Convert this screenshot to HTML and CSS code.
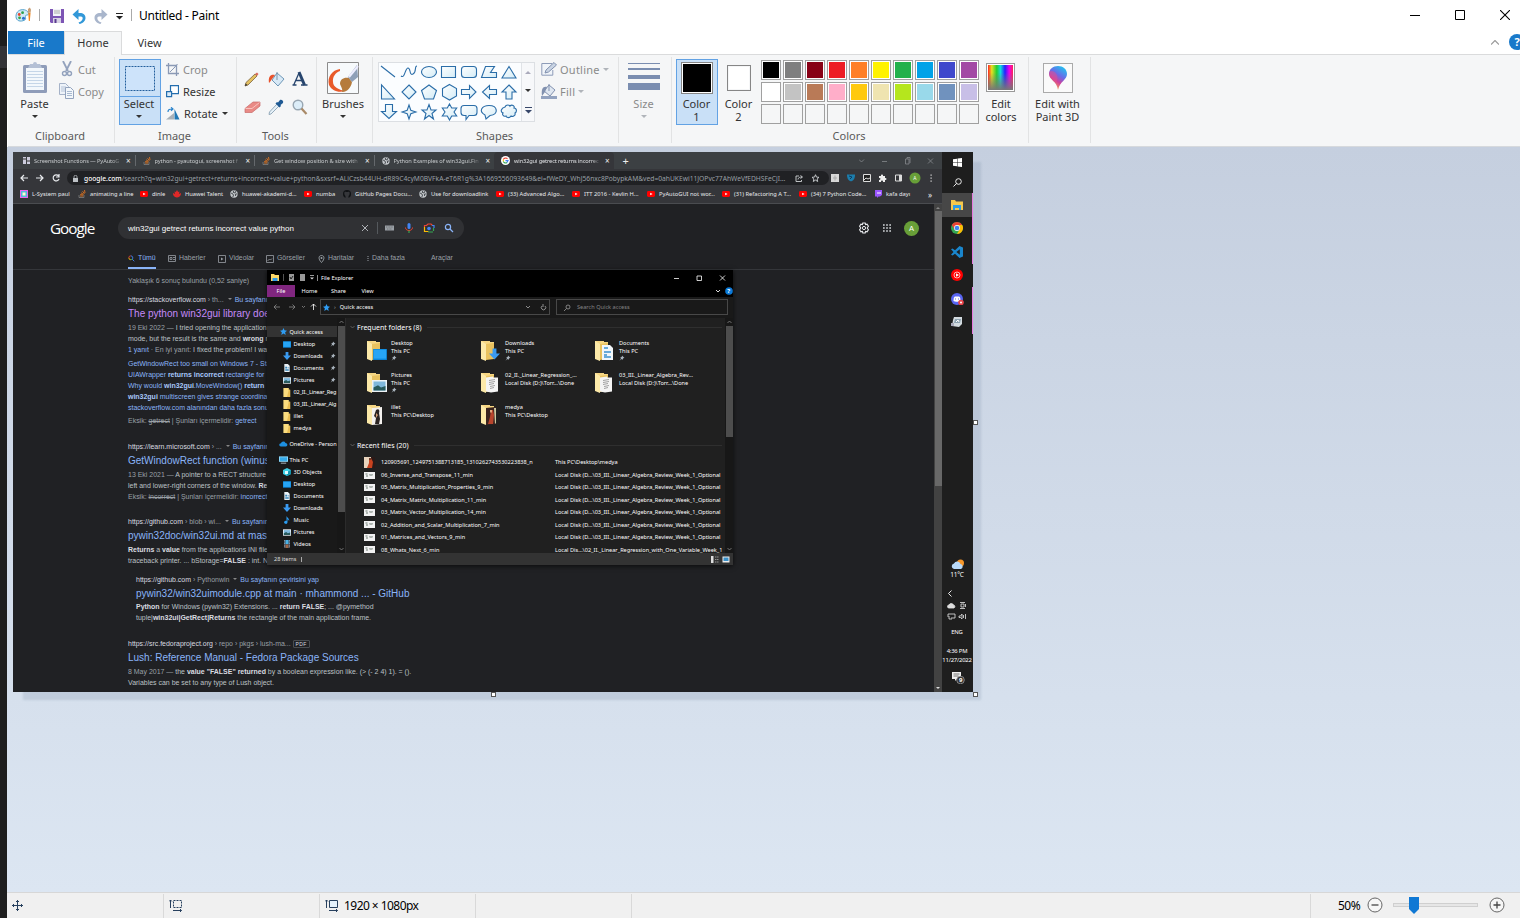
FILE: index.html
```html
<!DOCTYPE html>
<html lang="en">
<head>
<meta charset="utf-8">
<title>Untitled - Paint</title>
<link rel="stylesheet" href="styles.css">
</head>
<body>
<svg class="defs" aria-hidden="true">
  <defs>
    <linearGradient id="rainbow"><stop offset="0" stop-color="#f22"/><stop offset=".15" stop-color="#e8e020"/><stop offset=".35" stop-color="#2c3"/><stop offset=".5" stop-color="#1dd"/><stop offset=".68" stop-color="#22f"/><stop offset=".85" stop-color="#e0e"/><stop offset="1" stop-color="#f25"/></linearGradient>
    <linearGradient id="fade" x2="0" y2="1"><stop offset=".3" stop-color="#777" stop-opacity="0"/><stop offset="1" stop-color="#777"/></linearGradient>
    <linearGradient id="balloon" x1=".8" x2=".3" y2="1"><stop offset="0" stop-color="#1cc8f0"/><stop offset=".4" stop-color="#6a6ae8"/><stop offset=".65" stop-color="#d0409a"/><stop offset="1" stop-color="#fb4"/></linearGradient>
    <linearGradient id="shape" x2="1" y2="1"><stop offset="0" stop-color="#fff"/><stop offset="1" stop-color="#d4ecf6"/></linearGradient>
  </defs>
  <symbol id="pin" viewBox="0 0 6 6"><path d="M3 .5 5.5 3 4.6 3.1 3.6 4.2 3.5 5 2.4 4 .5 5.7 2 3.6 1 2.5 1.8 2.4 2.9 1.4z" fill="#a9b3bd"/></symbol>
  <symbol id="folder" viewBox="0 0 8 10"><path d="M0 0h6v2h1.5v8H0z" fill="#fbdc7e"/><path d="M6 2h1.5v8H4z" fill="#e9bd52"/></symbol>
  <symbol id="desk" viewBox="0 0 10 8"><path d="M0 0h10v8H0z" fill="#0a84d8"/><path d="M.5.5h9v6.5h-9z" fill="#27a5f5"/></symbol>
  <symbol id="down" viewBox="0 0 8 8"><path d="M2.6 0h2.8v3.6H8L4 8 0 3.6h2.6z" fill="#3a9af0"/></symbol>
  <symbol id="doc" viewBox="0 0 8 9"><path d="M1 0h4l2 2v7H1z" fill="#e9f1f6"/><path d="M2 3h2v2H2zM4.5 4h2v.7h-2zM2 6h4v1.5H2z" fill="#3a86b8"/></symbol>
  <symbol id="pic" viewBox="0 0 10 8"><path d="M0 0h10v8H0z" fill="#eef3f6"/><path d="M1 1h8v6H1z" fill="#7fb8dc"/><path d="M1 5l3-1.5L6 5l3-1v3H1z" fill="#285a5c"/></symbol>
  <symbol id="star" viewBox="0 0 8 8"><path d="M4 0 5.2 2.7 8 3 5.9 4.9 6.5 8 4 6.4 1.5 8 2.1 4.9 0 3 2.8 2.7z" fill="#2f9df4"/></symbol>
  <symbol id="cloud" viewBox="0 0 10 7"><path d="M2 6.5a2 2 0 0 1 0-4A3 3 0 0 1 7.4 2.2 2.2 2.2 0 0 1 8 6.5z" fill="#1d8fe0"/></symbol>
  <symbol id="pc" viewBox="0 0 10 8"><path d="M0 0h10v6H0z" fill="#8fdcff"/><path d="M1 1h8v4H1z" fill="#36a9e8"/><path d="M2 7h6v1H2z" fill="#b8c4cc"/></symbol>
  <symbol id="cube" viewBox="0 0 8 8"><path d="M0 2 4 0l4 2v4L4 8 0 6z" fill="#3ed0e6"/><path d="M4 4 8 2v4L4 8z" fill="#1394ae"/><path d="M2 3h3v3H2z" fill="#dffaff"/></symbol>
  <symbol id="music" viewBox="0 0 8 8"><path d="M3.5 0C4 2 7 2.5 6 5 5.800 3.800 5 3.400 4.500 3.300V6.500A1.700 1.500 0 1 1 3.500 5z" fill="#2a9cf0"/></symbol>
  <symbol id="video" viewBox="0 0 8 8"><path d="M1 0h6v8H1z" fill="#35465a"/><path d="M2.500 0h3v4h-3z" fill="#4db2e4"/><path d="M2.500 4.500h3V8h-3z" fill="#a06848"/><path d="M1.500 0v8M6.500 0v8" stroke="#ddd" stroke-width=".6" stroke-dasharray=".8 .8"/></symbol>
  <symbol id="bigfolder" viewBox="0 0 20 22"><path d="M0 1h9v1h4v17H5l-5-2z" fill="#f6d683"/><path d="M0 1l5 3v17l-5-2z" fill="#fce9a8"/><path d="M5 4l8-1v16l-8 1z" fill="#e9c25f"/></symbol>
  <symbol id="yt" viewBox="0 0 8 6"><rect width="8" height="6" rx="1.400" fill="#f00"/><path d="M3.200 1.700 5.600 3 3.200 4.300z" fill="#fff"/></symbol>
  <symbol id="so" viewBox="0 0 8 8"><path d="M1 5v2.500h5V5" fill="none" stroke="#888" stroke-width=".7"/><path d="M2 6h3.200M2.200 4.500l3 .5M3 2.800l2.700 1.600M4.600 1.200l1.800 2.600M6.500 0l.5 3" stroke="#e0741f" stroke-width=".9"/></symbol>
  <symbol id="globe" viewBox="0 0 8 8"><circle cx="4" cy="4" r="3.700" fill="#c4c8cc"/><path d="M1 3l2 1 .5 2-1 1M4 .6l-1 1.600 2 .8 1-2M7.400 4 5.400 4l.2 2" fill="none" stroke="#4a4e53" stroke-width="1"/></symbol>
  <symbol id="chrome" viewBox="0 0 12 12"><circle cx="6" cy="6" r="6" fill="#34a853"/><path d="M.8 3A6 6 0 0 1 11.200 3H6L3.400 7.500z" fill="#ea4335"/><path d="M11.200 3A6 6 0 0 1 6 12L8.600 7.500 6 3z" fill="#fbbc05"/><circle cx="6" cy="6" r="2.900" fill="#fff"/><circle cx="6" cy="6" r="2.300" fill="#4285f4"/></symbol>
  <symbol id="thumb" viewBox="0 0 11 7"><path d="M0 0h11v7H0z" fill="#f2f2f2"/><path d="M1.500 1.500h2v1h-2zM2 3.500h2v1H2zM5 2h4v.6H5zM5.500 3.500h3v.5h-3z" fill="#6d7a70"/></symbol>
  <symbol id="sheet" viewBox="0 0 13 16"><path d="M0 1l7-1v1h5v14l-7 1-5-1z" fill="#f4f4f4"/><path d="M3 4l6-1M3 6l6-1M3 8l5-1M4 10l5-1M4 12l4-1" stroke="#8b8b8b" stroke-width=".8"/></symbol>
</svg>

<div class="edge"></div>
<div class="app">
  <header class="titlebar">
    <svg class="logo" width="17" height="16" viewBox="0 0 18 17"><path d="M1 10C1 5 5 2 10 3c4 1 5 4 4 5s-3 0-3 2 1 3-1 4c-4 2-9 1-9-4z" fill="#cfe9f6" stroke="#4b9cc9"/><circle cx="4.500" cy="8" r="1.500" fill="#e8452e"/><circle cx="8" cy="6" r="1.500" fill="#2b9f4d"/><circle cx="4.800" cy="11.500" r="1.500" fill="#3aa33e"/><circle cx="9" cy="12" r="1.600" fill="#2a6fd0"/><path d="M14 6h2.500l-.8 9h-1z" fill="#f2861c"/><path d="M13.500 6l.3-4 2-1.500L17 3l-.5 3z" fill="#c8a078"/></svg>
    <i class="bar"></i>
    <svg class="save" width="14" height="14" viewBox="0 0 14 14"><path d="M0 0h14v14H1l-1-1z" fill="#7d55b5"/><path d="M3 0h8v7H3z" fill="#f3f3f8"/><path d="M4 2h6M4 4h6" stroke="#aaa"/><path d="M3 9h8v5H3z" fill="#d8d2e4"/><path d="M4.500 10h2v4h-2z" fill="#5a3b90"/></svg>
    <svg class="undo" width="14" height="15" viewBox="0 0 14 15"><path d="M6.500 0v4c4-.5 7 1 7 5 0 3-3 5.500-6 6l-1-1.500c3-1 4.300-2.700 4.200-4.500-.2-1.500-2-1.800-4.200-1.500V11L.5 5.500z" fill="#3298d8"/></svg>
    <svg class="redo" width="14" height="15" viewBox="0 0 14 15"><path d="M7.500 0v4c-4-.5-7 1-7 5 0 3 3 5.500 6 6l1-1.500C4.500 12.500 3.200 10.800 3.300 9c.2-1.500 2-1.800 4.200-1.500V11l6-5.500z" fill="#a9b6cc"/></svg>
    <svg class="qat" width="7" height="7" viewBox="0 0 7 7"><path d="M0 .5h7" stroke="#222"/><path d="M0 3h7L3.500 6.500z" fill="#222"/></svg>
    <i class="bar dark"></i>
    <span class="name">Untitled - Paint</span>
    <div class="winbtns">
      <svg width="10" height="10"><path d="M0 5.500h10" stroke="#000"/></svg>
      <svg width="10" height="10"><path d="M.5.5h9v9h-9z" fill="none" stroke="#000"/></svg>
      <svg width="10" height="10"><path d="M0 0l10 10M10 0 0 10" stroke="#000" stroke-width="1.100"/></svg>
    </div>
  </header>
  <nav class="tabs">
    <span class="tab file">File</span><span class="tab home">Home</span><span class="tab view">View</span>
    <div class="tabsright">
      <svg width="8" height="5" viewBox="0 0 8 5"><path d="M0 4.500 4 .5l4 4" fill="none" stroke="#9a9a9a" stroke-width="1.200"/></svg>
      <span class="help">?</span>
    </div>
  </nav>
  <section class="ribbon">
    <div class="group g-clip">
      <div class="body">
        <div class="big paste">
          <svg width="26" height="32" viewBox="0 0 26 32"><rect x="1" y="3" width="24" height="28" rx="1.500" fill="#8e9cb9"/><rect x="4" y="6" width="18" height="22" fill="#f3f8fc"/><path d="M5 9.500h16M5 12.500h16M5 15.500h16M5 18.500h16M5 21.500h16M5 24.500h16" stroke="#c5d6e8"/><path d="M8 2h3a2 2 0 0 1 4 0h3l2 4H6z" fill="#b4c0d5"/></svg>
          <span>Paste</span><i class="caret"></i>
        </div>
        <div class="col cutcopy">
          <div class="row dim"><svg width="16" height="16" viewBox="0 0 16 16"><path d="M4 0l5 10M12 0 7 10" stroke="#93a2bd" stroke-width="1.800"/><circle cx="5.500" cy="12.500" r="2" fill="none" stroke="#93a2bd" stroke-width="1.400"/><circle cx="10.500" cy="12.500" r="2" fill="none" stroke="#93a2bd" stroke-width="1.400"/></svg>Cut</div>
          <div class="row dim"><svg width="16" height="16" viewBox="0 0 16 16"><path d="M.5.5h6l3 3v8h-9z" fill="#eef3f9" stroke="#a5b2c8"/><path d="M2 4h5M2 6h5M2 8h4" stroke="#b5c3d8"/><path d="M6.500 4.500h5l3 3v8h-8z" fill="#f3f7fb" stroke="#93a3bd"/><path d="M8 8.500h5M8 10.500h5M8 12.500h5" stroke="#a8b9d0"/></svg>Copy</div>
        </div>
      </div>
      <div class="label">Clipboard</div>
    </div>
    <div class="group g-image">
      <div class="body">
        <div class="select">
          <div class="selicon"><svg width="30" height="25"><rect x=".5" y=".5" width="29" height="24" fill="#cde3fa" stroke="#235f9c" stroke-dasharray="2 1"/></svg></div>
          <div class="sellabel"><span>Select</span><i class="caret"></i></div>
        </div>
        <div class="col imgcol">
          <div class="row dim"><svg width="13" height="13" viewBox="0 0 13 13"><path d="M2.500 0v10.500H13M0 2.500h10.500V13" fill="none" stroke="#8a99b5" stroke-width="1.300"/><path d="M4 9l5-5M8 5l3.500-4" stroke="#8a99b5"/></svg>Crop</div>
          <div class="row"><svg width="13" height="13" viewBox="0 0 13 13"><path d="M4.500.6h8v8h-8z" fill="#fff" stroke="#246eae" stroke-width="1.200"/><path d="M.6 6.600h5v5h-5z" fill="#d9eaf8" stroke="#246eae" stroke-width="1.200"/></svg>Resize</div>
          <div class="row"><svg width="14" height="13" viewBox="0 0 14 13"><path d="M0 12.500 8 6v6.500z" fill="#a8b1b8"/><path d="M8.500 2v10.500h5z" fill="#2178b4"/><path d="M2 5c0-2 1-3 4-3M5 .3 7 2 5 3.800" fill="none" stroke="#2a84cc" stroke-width="1.200"/></svg>Rotate <i class="caret"></i></div>
        </div>
      </div>
      <div class="label">Image</div>
    </div>
    <div class="group g-tools">
      <div class="body tools">
        <svg width="16" height="16" viewBox="0 0 16 16"><path d="M1 15l1-3.500 9-8.500 2 2-9 9z" fill="#e3c060" stroke="#7d6440" stroke-width=".8"/><path d="M11 3l2-1.500L14.500 3 13 5z" fill="#d86a5c"/><path d="M1 15l.6-2.500L3.500 14z" fill="#333"/></svg>
        <svg width="17" height="16" viewBox="0 0 17 16"><path d="M9 2l7 6-6 7-6-6z" fill="#d8e9f6" stroke="#6f98b8"/><path d="M9 9V1" stroke="#7b96ac"/><path d="M7 4C3 3 0 5 1 12c1.500-1 2-3 3-4z" fill="#e8522c"/></svg>
        <svg width="16" height="16" viewBox="0 0 16 16"><path d="M1.500 14.500 7 2M4 9.500h7M.5 14h4M9 14h6.500" fill="none" stroke="#27456e" stroke-width="1.300"/><path d="M7 1l5.500 13" stroke="#27456e" stroke-width="3"/></svg>
        <svg width="17" height="16" viewBox="0 0 17 16"><path d="M1 9.500l8-6.500h7v4L8 13.500H1z" fill="#e98a86" stroke="#c86c6a" stroke-width=".7"/><path d="M1.500 9.500H8L15.500 3.500" fill="none" stroke="#f8c3be"/></svg>
        <svg width="16" height="16" viewBox="0 0 16 16"><path d="M9 5l2 2-8 8-2 .5.500-2.500z" fill="#e6f1f8" stroke="#7d98ac" stroke-width=".8"/><path d="M7.500 4.500 9 3l1 .5L12 1c1.500-1 4 1 3 3l-2.500 2 .5 1-1.500 1.500z" fill="#1f5a94"/></svg>
        <svg width="16" height="16" viewBox="0 0 16 16"><circle cx="6" cy="6" r="4.800" fill="#dcedf8" stroke="#98a6b2" stroke-width="1.400"/><path d="M9.500 9.500 14.500 15" stroke="#a98a68" stroke-width="2.200"/></svg>
      </div>
      <div class="label">Tools</div>
    </div>
    <div class="group g-brush">
      <div class="big">
        <svg width="32" height="32" viewBox="0 0 32 32"><path d="M.5.500h31v31H.500z" fill="#f7fafc" stroke="#8c8c8c"/><path d="M13 7C5 8 0 15 2 23c3 6 9 8 17 6-7-1-13-4-13-9-.5-5 2-9 7-11z" fill="#e85a2a"/><path d="M13 22c0-5 4-7 9-6l3 4c-1 6-5 10-10 10 1-3-1-5-2-8z" fill="#b57b3c"/><path d="M21 15 30 3l1 12-6 5z" fill="#8fa0b8"/><path d="M22 15 31 4" stroke="#eef" stroke-width="2"/></svg>
        <span>Brushes</span><i class="caret"></i>
      </div>
    </div>
    <div class="group g-shapes">
      <div class="body">
        <div class="gallery">
          <svg class="shapes" width="142" height="58" viewBox="1 0 142 58" fill="url(#shape)" stroke="#2a6da8" stroke-width="1.100">
            <path d="M3 3l14 11"/><path d="M23 13c4 3 4-8 7-8s1 8 5 6 1-8 4-8" fill="none"/><ellipse cx="51" cy="9" rx="7.500" ry="5.500"/><path d="M63.500 3.500h14v11h-14z"/><rect x="83.500" y="3.500" width="15" height="11" rx="3"/><path d="M103.500 14.500l4-11h9l-4 6h6v5z"/><path d="M131 3.500l7 11.500h-14z"/>
            <path d="M3.500 22v14h13z"/><path d="M31 22l7 7-7 7-7-7z"/><path d="M51 22l7.500 5.500-3 8.500h-9l-3-8.500z"/><path d="M71.500 21.500l7 4v7.500l-7 4-7-4v-7.500z"/><path d="M83.500 26.500h8v-4l6.500 6.500-6.500 6.500v-4h-8z"/><path d="M118.500 26.500h-7v-4l-7 6.500 7 6.500v-4h7z"/><path d="M131 22l7 7h-4v7h-6v-7h-4z"/>
            <path d="M7.500 41.500h7v7h4l-7.500 7-7.500-7h4z"/><path d="M31 42l1.800 5.200L38 49l-5.200 1.800L31 56l-1.800-5.200L24 49l5.200-1.800z"/><path d="M51 41.500l2 5.500h5l-4 3.500 1.500 5.500-4.500-3.500-4.500 3.500 1.500-5.500-4-3.500h5z"/><path d="M71.500 41l2.200 4h5l-2.700 4 2.700 4h-5l-2.200 4-2.200-4h-5l2.700-4-2.700-4h5z"/><path d="M86 42.500h10q3 0 3 3v4q0 3-3 3h-5l-3 4v-4h-2q-3 0-3-3v-4q0-3 3-3z"/><path d="M107 52c-7-4-3-9.500 4-9.500 9 0 10 9 1 10l-4 3.500z"/><path d="M127 44c1-3 5-2 5-1 2-2 5 0 4 2 3 0 3 4 1 5 1 3-3 4-4 3-2 3-5 1-5 0-3 1-4-2-3-3-3-1-2-5 2-6z"/>
          </svg>
          <div class="gscroll"><i class="caret up"></i><i class="caret"></i><svg width="7" height="7" viewBox="0 0 7 7"><path d="M0 .5h7" stroke="#37476a"/><path d="M0 3h7L3.500 6.500z" fill="#37476a"/></svg></div>
        </div>
        <div class="col outl">
          <div class="row dim"><svg width="16" height="14" viewBox="0 0 16 14"><path d="M11 1.500H.8v11.700h11V8" fill="#f0f4f9" stroke="#8d9cb8"/><path d="M4 11l1-3 8-7.500L15.500 3l-8 7z" fill="#c9d4e4" stroke="#8191af"/></svg>Outline <i class="caret"></i></div>
          <div class="row dim"><svg width="16" height="15" viewBox="0 0 16 15"><path d="M0 12h16v3H0z" fill="#93a3c0"/><path d="M8 1l6 5-5 6-6-5z" fill="#dfe7f1" stroke="#8191af"/><path d="M8 7V0" stroke="#8191af"/><path d="M6 3C2 2 0 5 1 12l3-4z" fill="#8191af"/></svg>Fill <i class="caret"></i></div>
        </div>
      </div>
      <div class="label">Shapes</div>
    </div>
    <div class="group g-size">
      <div class="big dim">
        <svg width="32" height="32" viewBox="0 0 32 32"><path d="M0 1h32v1H0zM0 6h32v2H0zM0 13h32v4H0zM0 21h32v7H0z" fill="#7a8db0"/></svg>
        <span>Size</span><i class="caret"></i>
      </div>
    </div>
    <div class="group g-colors">
      <div class="body">
        <div class="colorbtn on"><i class="well black"></i><span>Color<br>1</span></div>
        <div class="colorbtn"><i class="well white"></i><span>Color<br>2</span></div>
        <div class="palette"><i></i><i></i><i></i><i></i><i></i><i></i><i></i><i></i><i></i><i></i><i></i><i></i><i></i><i></i><i></i><i></i><i></i><i></i><i></i><i></i><i></i><i></i><i></i><i></i><i></i><i></i><i></i><i></i><i></i><i></i></div>
        <div class="colorbtn edit"><svg width="30" height="30" viewBox="0 0 30 30"><rect x=".5" y=".5" width="28" height="28" fill="#fff" stroke="#999"/><path d="M2 2h25v25H2z" fill="url(#rainbow)"/><path d="M2 2h25v25H2z" fill="url(#fade)"/></svg><span>Edit<br>colors</span></div>
      </div>
      <div class="label">Colors</div>
    </div>
    <div class="group g-3d">
      <div class="colorbtn edit"><svg width="30" height="30" viewBox="0 0 30 30"><rect x=".5" y=".5" width="29" height="29" fill="#fafafa" stroke="#aaa"/><path d="M15 3c5 0 9 3 9 8 0 6-7 7-9 16-1-9-9-10-9-16 0-5 4-8 9-8z" fill="url(#balloon)"/><path d="M6.500 9c4-3 8 2 8 6l-1 5C11 16 6 15 6.500 9z" fill="#e8508c" opacity=".45"/></svg><span>Edit with<br>Paint 3D</span></div>
    </div>
  </section>

  <main class="stage">
    <div class="canvas">
      <div class="browser">
        <div class="ctabs">
          <div class="ctab t1"><svg width="7" height="7" viewBox="0 0 7 7"><path d="M0 0h3v7H0zM4 0h3v7H4z" fill="#ccd"/><path d="M0 2h3M4 4h3" stroke="#333"/></svg><span>Screenshot Functions — PyAutoG</span><b>×</b></div>
          <div class="ctab t2"><svg width="8" height="8"><use href="#so"/></svg><span>python - pyautogui, screenshot f</span><b>×</b></div>
          <div class="ctab t3"><svg width="8" height="8"><use href="#so"/></svg><span>Get window position &amp; size with</span><b>×</b></div>
          <div class="ctab t4"><svg width="8" height="8"><use href="#globe"/></svg><span>Python Examples of win32gui.Fin</span><b>×</b></div>
          <div class="ctab active"><svg width="9" height="9" viewBox="0 0 9 9"><circle cx="4.500" cy="4.500" r="4.500" fill="#fff"/><path d="M6.500 3A2.500 2.500 0 0 0 2.300 3.500" stroke="#ea4335" fill="none" stroke-width="1.100"/><path d="M2.300 3.500v2" stroke="#fbbc05" stroke-width="1.100"/><path d="M2.300 5.500A2.500 2.500 0 0 0 6 6.500" stroke="#34a853" fill="none" stroke-width="1.100"/><path d="M4.500 4.600H7L6 6.500" stroke="#4285f4" fill="none" stroke-width="1.100"/></svg><span>win32gui getrect returns incorrec</span><b>×</b></div>
          <span class="plus">+</span>
          <svg class="cwin" width="76" height="8" viewBox="0 0 76 8" fill="none" stroke="#85898d" stroke-width=".8"><path d="M0 2.500 2.500 5 5 2.500M23 4.500h5M46.500 2h3.500v5h-3.500zM48 2V.5h3V6M69 1.500l5 5M74 1.500l-5 5"/></svg>
        </div>
        <div class="ctool">
          <svg class="nav" width="42" height="10" viewBox="0 0 42 10" fill="none" stroke="#e8eaed" stroke-width="1.200"><path d="M8 5H1M4 2 1 5l3 3M16 5h7M20 2l3 3-3 3M38.500 3a3 3 0 1 0 .5 3M39 1v3h-3"/></svg>
          <div class="omni">
            <svg width="5" height="7" viewBox="0 0 5 7"><path d="M0 3h5v4H0z" fill="#bdc1c6"/><path d="M1 3V1.800a1.500 1.500 0 0 1 3 0V3" fill="none" stroke="#bdc1c6" stroke-width=".8"/></svg>
            <span class="url"><b>google.com</b>/search?q=win32gui+getrect+returns+incorrect+value+python&amp;sxsrf=ALiCzsb44UH-dR89C4cyM0BVFkA-eT6R1g%3A1669556093649&amp;ei=fWeDY_WhJ56nxc8PobypkAM&amp;ved=0ahUKEwi11JOPvc77AhWeVfEDHSFeCjI...</span>
            <svg class="share" width="26" height="9" viewBox="0 0 26 9" fill="none" stroke="#cfd2d5" stroke-width=".9"><path d="M4 2H1v5.500h5.500V6M3 5.500C3 3.500 5 3 7 3M5.500 1.500l2 1.500-2 1.500"/><path d="M20.500.7l1 2.400 2.500.2-1.900 1.700.6 2.500-2.200-1.400-2.200 1.400.6-2.500L17 3.300l2.500-.2z"/></svg>
          </div>
          <svg class="exts" width="105" height="12" viewBox="0 0 105 12"><path d="M2 2h8v8H2z" fill="#d8d8d8"/><path d="M4 6h4M6 3.500v5" stroke="#aaa"/><path d="M18 2.500h8c0 5-2 6-4 7-2-1-4-2-4-7z" fill="#1c7dac"/><path d="M20 4l3 1-2 2" stroke="#0c3d60" fill="none"/><path d="M34.500 2.500h7v7h-7z" fill="#222" stroke="#ddd"/><path d="M35 8l2-2 2 1 2-1" stroke="#ddd" fill="none"/><path d="M50 4h2c-.5-2 2.500-2 2 0h2v2c2-.5 2 2.500 0 2v2h-2c.5-2-2.500-2-2 0h-2V8c2 0 2-2.500 0-2z" fill="#eee"/><path d="M66.500 3h6v6h-6z" fill="none" stroke="#ddd"/><path d="M70 3h3v6h-3z" fill="#ddd"/><circle cx="86" cy="6" r="5.500" fill="#689f38"/><path d="M101.500 2.500h1.200v1.200h-1.200zM101.500 5.500h1.200v1.200h-1.200zM101.500 8.500h1.200v1.200h-1.200z" fill="#ddd"/><text x="84.300" y="8" class="ava">A</text></svg>
        </div>
        <div class="marks">
          <span class="m1"><svg width="8" height="8" viewBox="0 0 8 8"><path d="M0 0h8v8H0z" fill="#e6e"/><path d="M1 1h6v6H1z" fill="#5bd"/><path d="M2.500 2.500h3v3h-3z" fill="#ffc"/></svg>L-System paul</span>
          <span class="m2"><svg width="8" height="8"><use href="#so"/></svg>animating a line</span>
          <span class="m3"><svg width="8" height="6"><use href="#yt"/></svg>dinle</span>
          <span class="m4"><svg width="8" height="8" viewBox="0 0 8 8"><path d="M4 7.500C0 7 0 4 0 3l2 1L1.500 1.500 3 2l.5-1.500h1L5 2l1.500-.5L6 4l2-1c0 1 0 4-4 4.500z" fill="#e02828"/></svg>Huawei Talent</span>
          <span class="m5"><svg width="8" height="8"><use href="#globe"/></svg>huawei-akademi-d...</span>
          <span class="m6"><svg width="8" height="6"><use href="#yt"/></svg>numba</span>
          <span class="m7"><svg width="8" height="8" viewBox="0 0 8 8"><circle cx="4" cy="4" r="4" fill="#101215"/><path d="M2.500 8V6C1 5 1 2 2 1.500l1 .5h2l1-.5C7 2 7 5 5.500 6v2" fill="#35363a"/></svg>GitHub Pages Docu...</span>
          <span class="m8"><svg width="8" height="8"><use href="#globe"/></svg>Use for downloadlink</span>
          <span class="m9"><svg width="8" height="6"><use href="#yt"/></svg>(33) Advanced Algo...</span>
          <span class="m10"><svg width="8" height="6"><use href="#yt"/></svg>ITT 2016 - Kevlin H...</span>
          <span class="m11"><svg width="8" height="6"><use href="#yt"/></svg>PyAutoGUI not wor...</span>
          <span class="m12"><svg width="8" height="6"><use href="#yt"/></svg>(31) Refactoring A T...</span>
          <span class="m13"><svg width="8" height="6"><use href="#yt"/></svg>(34) 7 Python Code...</span>
          <span class="m14"><svg width="7" height="8" viewBox="0 0 7 8"><path d="M0 0h7v5L5 6.500H3.500L2 8V6.500H0z" fill="#9a55ff"/><path d="M3 2v2M5 2v2" stroke="#fff"/></svg>kafa dayı</span>
          <span class="more">»</span>
        </div>
        <div class="page">
          <div class="doc">
            <div class="ghead">
              <div class="glogo">Google</div>
              <div class="gsearch"><span>win32gui getrect returns incorrect value python</span>
                <svg width="96" height="12" viewBox="0 0 96 12"><path d="M3 3l6 6M9 3 3 9" stroke="#bdc1c6" stroke-width=".9"/><path d="M18.500 0v12" stroke="#5f6368" stroke-width=".8"/><path d="M26 3.500h9v5h-9z" fill="#9aa0a6"/><path d="M27 5h7M28 7h5" stroke="#555" stroke-width=".6" stroke-dasharray="1 .6"/><rect x="48.500" y="1" width="3" height="6" rx="1.500" fill="#4285f4"/><path d="M46.500 5.500c0 4 7 4 7 0" fill="none" stroke="#ea4335"/><path d="M50 8.500V11" stroke="#34a853" stroke-width="1.200"/><path d="M65.500 5V3.500h2L69 2h3l1.500 1.500" fill="none" stroke="#ea4335" stroke-width="1.200"/><path d="M65.500 5v4.500h4" fill="none" stroke="#fbbc05" stroke-width="1.200"/><path d="M69 10h5M74.500 9V6" stroke="#34a853" stroke-width="1.200"/><path d="M73 3.500h2V6" fill="none" stroke="#4285f4" stroke-width="1.200"/><circle cx="70" cy="6.500" r="1.800" fill="#4285f4"/><circle cx="89" cy="5" r="2.600" fill="none" stroke="#8ab4f8" stroke-width="1.200"/><path d="M91 7l3 3" stroke="#8ab4f8" stroke-width="1.300"/></svg>
              </div>
              <svg class="gtools" width="34" height="12" viewBox="0 0 34 12"><path d="M4.800 1h2.400l.4 1.600 1.500-.4 1.300 2L9.200 6l1.200 1.800-1.300 2-1.500-.4-.4 1.600H4.800l-.4-1.600-1.500.4-1.300-2L2.800 6 1.600 4.200l1.300-2 1.500.4z" fill="none" stroke="#e8eaed" stroke-width="1.100"/><circle cx="6" cy="6" r="1.600" fill="none" stroke="#e8eaed"/><path d="M25 3h8M25 6h8M25 9h8" stroke="#d0d3d6" stroke-width="1.700" stroke-dasharray="1.700 1.450"/></svg>
              <span class="gava">A</span>
            </div>
            <div class="gtabs">
              <span class="on"><svg width="7" height="7" viewBox="0 0 10 10" fill="none" stroke-width="1.300"><path d="M4 1.200A2.800 2.800 0 0 0 1.200 4" stroke="#ea4335"/><path d="M1.200 4A2.800 2.800 0 0 0 4 6.800" stroke="#fbbc05"/><path d="M4 1.200A2.800 2.800 0 0 1 6 6l3 3" stroke="#4285f4"/><path d="M4 6.800 6 6" stroke="#34a853"/></svg>Tümü</span>
              <span class="n2"><svg width="8" height="7" viewBox="0 0 8 7"><path d="M.5.5h7v6h-7zM2 2.500h2v2H2zM5 2.500h2M5 4.500h2" fill="none" stroke="#9aa0a6" stroke-width=".8"/></svg>Haberler</span>
              <span class="n3"><svg width="8" height="8" viewBox="0 0 8 8"><path d="M.5.5h7v7h-7z" fill="none" stroke="#9aa0a6" stroke-width=".8"/><path d="M3 2.500v3L5.500 4z" fill="#9aa0a6"/></svg>Videolar</span>
              <span class="n4"><svg width="8" height="8" viewBox="0 0 8 8"><path d="M.5.5h7v7h-7zM1.500 6l2-2 1 1L6 3.500" fill="none" stroke="#9aa0a6" stroke-width=".8"/></svg>Görseller</span>
              <span class="n5"><svg width="7" height="8" viewBox="0 0 7 8"><path d="M3.500 7.500C0 4 .5.500 3.500.500S7 4 3.500 7.500z" fill="none" stroke="#9aa0a6" stroke-width=".9"/><circle cx="3.500" cy="3" r="1" fill="#9aa0a6"/></svg>Haritalar</span>
              <span class="n6"><svg width="2" height="7" viewBox="0 0 2 7"><path d="M.5 1h1v1h-1zM.5 3h1v1h-1zM.5 5h1v1h-1z" fill="#9aa0a6"/></svg>Daha fazla</span>
              <span class="n7">Araçlar</span>
            </div>
            <div class="results">
              <p class="stat">Yaklaşık 6 sonuç bulundu (0,52 saniye)</p>
              <article>
                <p class="u">https://stackoverflow.com <s>› th...</s> <i></i><a>Bu sayfanın</a></p>
                <h3 class="seen">The python win32gui library does</h3>
                <p><s>19 Eki 2022 —</s> I tried opening the application in</p>
                <p>mode, but the result is the same and <b>wrong</b> re</p>
                <p><a>1 yanıt</a> <s>· En iyi yanıt:</s> I fixed the problem! I was</p>
                <div class="links">
                  <p>GetWindowRect too small on Windows 7 - Sta</p>
                  <p>UIAWrapper <b>returns incorrect</b> rectangle for</p>
                  <p>Why would <b>win32gui</b>.MoveWindow() <b>return</b></p>
                  <p><b>win32gui</b> multiscreen gives strange coordinat</p>
                  <p>stackoverflow.com alanından daha fazla sonuç</p>
                </div>
                <p class="miss"><s>Eksik: <del>getrect</del> | Şunları içermelidir:</s> <a>getrect</a></p>
              </article>
              <article class="r2">
                <p class="u">https://learn.microsoft.com <s>› ...</s> <i></i><a>Bu sayfanın</a></p>
                <h3>GetWindowRect function (winuser</h3>
                <p><s>13 Eki 2021 —</s> A pointer to a RECT structure th</p>
                <p>left and lower-right corners of the window. <b>Ret</b></p>
                <p><s>Eksik: <del>incorrect</del> | Şunları içermelidir:</s> <a>incorrect</a></p>
              </article>
              <article class="r3">
                <p class="u">https://github.com <s>› blob › wi...</s> <i></i><a>Bu sayfanın</a></p>
                <h3>pywin32doc/win32ui.md at master</h3>
                <p><b>Returns</b> a <b>value</b> from the applications INI file</p>
                <p>traceback printer. ... bStorage=<b>FALSE</b> : int. No</p>
              </article>
              <article class="r4">
                <p class="u">https://github.com <s>› Pythonwin</s> <i></i><a>Bu sayfanın çevirisini yap</a></p>
                <h3>pywin32/win32uimodule.cpp at main · mhammond ... - GitHub</h3>
                <p><b>Python</b> for Windows (pywin32) Extensions. ... <b>return FALSE</b>; ... @pymethod</p>
                <p>tuple|<b>win32ui|GetRect|Returns</b> the rectangle of the main application frame.</p>
              </article>
              <article class="r5">
                <p class="u">https://src.fedoraproject.org <s>› repo › pkgs › lush-ma...</s> <em>PDF</em></p>
                <h3>Lush: Reference Manual - Fedora Package Sources</h3>
                <p><s>8 May 2017 —</s> the <b>value "FALSE" returned</b> by a boolean expression like. (&gt; (- 2 4) 1). = ().</p>
                <p>Variables can be set to any type of Lush object.</p>
              </article>
            </div>
          </div>
          <div class="pscroll"><i class="caret up"></i><div class="pthumb"></div><i class="caret"></i></div>
        </div>
      </div>

      <div class="explorer">
        <div class="etitle">
          <svg width="36" height="9" viewBox="0 0 36 9"><path d="M0 1h3l1 1h4v6H0z" fill="#fbd767"/><path d="M1.500 5h5v3h-5z" fill="#2f9be8"/><path d="M12.500 1v7" stroke="#777" stroke-width=".7"/><path d="M18 1h5v7h-5zM29 1h5v7h-5z" fill="#999"/><path d="M19 4l1 2 2-3" stroke="#222" fill="none"/></svg>
          <svg width="4" height="5" viewBox="0 0 4 5"><path d="M0 .5h4" stroke="#ddd" stroke-width=".7"/><path d="M0 2.500h4L2 4.500z" fill="#ddd"/></svg>
          <i></i><span>File Explorer</span>
          <svg class="ewin" width="52" height="8" viewBox="0 0 52 8" fill="none" stroke="#fff" stroke-width=".8"><path d="M0 4.500h5M23 2h4.500v4.500H23zM46 1.500l5 5M51 1.500l-5 5"/></svg>
        </div>
        <div class="etabs"><span class="efile">File</span><span>Home</span><span>Share</span><span>View</span>
          <svg width="18" height="8" viewBox="0 0 18 8"><path d="M1 3l2 2 2-2" fill="none" stroke="#ddd"/><circle cx="14" cy="4" r="3.800" fill="#0a78d6"/><text x="12.300" y="6.200" class="q">?</text></svg>
        </div>
        <div class="eaddr">
          <svg width="44" height="8" viewBox="0 0 44 8" fill="none" stroke="#8c8c8c" stroke-width=".8"><path d="M6 4H0M2.500 1.500 0 4l2.500 2.500M15 4h6M18.500 1.500 21 4l-2.500 2.500M28 3l1.500 1.500L31 3"/><path d="M39.500 7V1M37 3.500 39.500 1 42 3.500" stroke="#fff"/></svg>
          <div class="ebox"><svg width="7" height="7"><use href="#star"/></svg><span class="sep">›</span><span>Quick access</span>
            <svg class="r" width="22" height="8" viewBox="0 0 22 8" fill="none" stroke="#aaa" stroke-width=".8"><path d="M1 3l2 2 2-2M17 3a2.200 2.200 0 1 0 3 0M18 1v3"/></svg></div>
          <div class="esearch"><svg width="7" height="7" viewBox="0 0 7 7" fill="none" stroke="#999" stroke-width=".8"><circle cx="4" cy="3" r="2"/><path d="M2.500 4.500 0 7"/></svg>Search Quick access</div>
        </div>
        <div class="emain">
          <div class="tree">
            <div class="l0 sel"><svg width="7" height="7"><use href="#star"/></svg>Quick access</div>
            <div><svg width="8" height="7"><use href="#desk"/></svg>Desktop<svg class="p" width="6" height="6"><use href="#pin"/></svg></div>
            <div><svg width="8" height="8"><use href="#down"/></svg>Downloads<svg class="p" width="6" height="6"><use href="#pin"/></svg></div>
            <div><svg width="8" height="8"><use href="#doc"/></svg>Documents<svg class="p" width="6" height="6"><use href="#pin"/></svg></div>
            <div><svg width="8" height="7"><use href="#pic"/></svg>Pictures<svg class="p" width="6" height="6"><use href="#pin"/></svg></div>
            <div><svg width="8" height="9"><use href="#folder"/></svg>02_II._Linear_Reg</div>
            <div><svg width="8" height="9"><use href="#folder"/></svg>03_III._Linear_Alg</div>
            <div><svg width="8" height="9"><use href="#folder"/></svg>illet</div>
            <div><svg width="8" height="9"><use href="#folder"/></svg>medya</div>
            <div class="l0 gap"><svg width="9" height="6"><use href="#cloud"/></svg>OneDrive - Person</div>
            <div class="l0 gap"><svg width="9" height="8"><use href="#pc"/></svg>This PC</div>
            <div><svg width="8" height="8"><use href="#cube"/></svg>3D Objects</div>
            <div><svg width="8" height="7"><use href="#desk"/></svg>Desktop</div>
            <div><svg width="8" height="8"><use href="#doc"/></svg>Documents</div>
            <div><svg width="8" height="8"><use href="#down"/></svg>Downloads</div>
            <div><svg width="8" height="8"><use href="#music"/></svg>Music</div>
            <div><svg width="8" height="7"><use href="#pic"/></svg>Pictures</div>
            <div><svg width="8" height="8"><use href="#video"/></svg>Videos</div>
          </div>
          <div class="escroll tscroll"><svg width="5" height="4" viewBox="0 0 5 4"><path d="M.5 3 2.500 1l2 2" fill="none" stroke="#888" stroke-width=".8"/></svg><div></div><svg width="5" height="4" viewBox="0 0 5 4"><path d="M.5 1l2 2 2-2" fill="none" stroke="#888" stroke-width=".8"/></svg></div>
          <div class="files">
            <div class="fh"><svg width="5" height="4" viewBox="0 0 5 4"><path d="M.5 1l2 2 2-2" fill="none" stroke="#777" stroke-width=".7"/></svg><span>Frequent folders (8)</span><i></i></div>
            <div class="fgrid">
              <div><svg width="22" height="22" viewBox="0 0 22 22"><use href="#bigfolder" width="20" height="22"/><use href="#desk" x="6" y="9" width="14" height="11"/></svg><p>Desktop<br>This PC<br><svg width="6" height="6"><use href="#pin"/></svg></p></div>
              <div><svg width="22" height="22" viewBox="0 0 22 22"><use href="#bigfolder" width="20" height="22"/><use href="#down" x="8" y="8" width="11" height="12"/></svg><p>Downloads<br>This PC<br><svg width="6" height="6"><use href="#pin"/></svg></p></div>
              <div><svg width="22" height="22" viewBox="0 0 22 22"><use href="#bigfolder" width="20" height="22"/><path d="M7 5h8l3 3v12H7z" fill="#f1f6fa"/><path d="M9 8h4M9 12h7M9 15h3M9 17h7" stroke="#3d91cf" stroke-width="1.300"/></svg><p>Documents<br>This PC<br><svg width="6" height="6"><use href="#pin"/></svg></p></div>
              <div><svg width="22" height="22" viewBox="0 0 22 22"><use href="#bigfolder" width="20" height="22"/><use href="#pic" x="5" y="8" width="15" height="12"/></svg><p>Pictures<br>This PC<br><svg width="6" height="6"><use href="#pin"/></svg></p></div>
              <div><svg width="22" height="22" viewBox="0 0 22 22"><use href="#bigfolder" width="20" height="22"/><use href="#sheet" x="5" y="4" width="13" height="17"/></svg><p>02_II._Linear_Regression_...<br>Local Disk (D:)\Torr...\Done</p></div>
              <div><svg width="22" height="22" viewBox="0 0 22 22"><use href="#bigfolder" width="20" height="22"/><use href="#sheet" x="5" y="4" width="13" height="17"/></svg><p>03_III._Linear_Algebra_Rev...<br>Local Disk (D:)\Torr...\Done</p></div>
              <div><svg width="22" height="22" viewBox="0 0 22 22"><use href="#bigfolder" width="20" height="22"/><path d="M5 4l10-1v17l-10 1z" fill="#f4f1ee"/><path d="M9 6c3-2 4 1 3 3l1 6-1 5H8l1-6-2-2z" fill="#2b2422"/><path d="M9 9l2 2-2 3z" fill="#d19a74"/></svg><p>illet<br>This PC\Desktop</p></div>
              <div><svg width="22" height="22" viewBox="0 0 22 22"><use href="#bigfolder" width="20" height="22"/><path d="M5 4l10-1v17l-10 1z" fill="#3a2420"/><path d="M10 6h2l1 5-1 9H7l2-7z" fill="#b8442c"/><path d="M13 4h2v15l-1 1z" fill="#cfc9a0"/><path d="M9 6h2v2.500H9z" fill="#e0a67c"/></svg><p>medya<br>This PC\Desktop</p></div>
            </div>
            <div class="fh"><svg width="5" height="4" viewBox="0 0 5 4"><path d="M.5 1l2 2 2-2" fill="none" stroke="#777" stroke-width=".7"/></svg><span>Recent files (20)</span><i></i></div>
            <div class="flist">
              <div><svg width="11" height="11" viewBox="0 0 11 11"><path d="M0 0h11v11H0z" fill="#e8d3bc"/><path d="M7 0h4v11H7z" fill="#2a1a18"/><path d="M5 1h2l2 4-1 6H3l2-5z" fill="#c8431f"/><path d="M5 1h2v2H5z" fill="#6b3a28"/></svg><span>120905691_1249751388713185_1310262743530223838_n</span><span>This PC\Desktop\medya</span></div>
              <div><svg width="11" height="7"><use href="#thumb"/></svg><span>06_Inverse_and_Transpose_11_min</span><span>Local Disk (D...\03_III._Linear_Algebra_Review_Week_1_Optional</span></div>
              <div><svg width="11" height="7"><use href="#thumb"/></svg><span>05_Matrix_Multiplication_Properties_9_min</span><span>Local Disk (D...\03_III._Linear_Algebra_Review_Week_1_Optional</span></div>
              <div><svg width="11" height="7"><use href="#thumb"/></svg><span>04_Matrix_Matrix_Multiplication_11_min</span><span>Local Disk (D...\03_III._Linear_Algebra_Review_Week_1_Optional</span></div>
              <div><svg width="11" height="7"><use href="#thumb"/></svg><span>03_Matrix_Vector_Multiplication_14_min</span><span>Local Disk (D...\03_III._Linear_Algebra_Review_Week_1_Optional</span></div>
              <div><svg width="11" height="7"><use href="#thumb"/></svg><span>02_Addition_and_Scalar_Multiplication_7_min</span><span>Local Disk (D...\03_III._Linear_Algebra_Review_Week_1_Optional</span></div>
              <div><svg width="11" height="7"><use href="#thumb"/></svg><span>01_Matrices_and_Vectors_9_min</span><span>Local Disk (D...\03_III._Linear_Algebra_Review_Week_1_Optional</span></div>
              <div><svg width="11" height="7"><use href="#thumb"/></svg><span>08_Whats_Next_6_min</span><span>Local Dis...\02_II._Linear_Regression_with_One_Variable_Week_1</span></div>
            </div>
          </div>
          <div class="escroll fscroll"><svg width="5" height="4" viewBox="0 0 5 4"><path d="M.5 3 2.500 1l2 2" fill="none" stroke="#888" stroke-width=".8"/></svg><div></div><svg width="5" height="4" viewBox="0 0 5 4"><path d="M.5 1l2 2 2-2" fill="none" stroke="#888" stroke-width=".8"/></svg></div>
        </div>
        <div class="estatus"><span>28 items</span><i></i><svg width="20" height="7" viewBox="0 0 20 7"><path d="M1 0h2.500v7H1z" fill="#ddd"/><path d="M5 1h4M5 3.500h4M5 6h4" stroke="#aaa" stroke-width=".8" stroke-dasharray="1.500 .5"/><path d="M12.500.5h7v6h-7z" fill="#eee"/><path d="M13.500 1.500h5v3.500h-5z" fill="#3a90c8"/></svg></div>
      </div>

      <aside class="taskbar">
        <div><svg width="9" height="9" viewBox="0 0 9 9"><path d="M0 1.200 4 .7v3.500H0zM4.500.6 9 0v4.200H4.500zM0 4.700h4v3.600L0 7.800zM4.500 4.700H9V9l-4.500-.6z" fill="#fff"/></svg></div>
        <div><svg width="9" height="9" viewBox="0 0 9 9" fill="none" stroke="#fff" stroke-width=".9"><circle cx="5.500" cy="3.500" r="2.800"/><path d="M3.500 5.500.5 8.500"/></svg></div>
        <div class="cur run"><svg width="12" height="10" viewBox="0 0 12 10"><path d="M0 0h4l1 1.500h7V10H0z" fill="#f6c84c"/><path d="M2 5h8v5H8V8H4v2H2z" fill="#2d9be6"/></svg></div>
        <div class="run"><svg width="12" height="12"><use href="#chrome"/></svg></div>
        <div class="run"><svg width="12" height="12" viewBox="0 0 12 12"><path d="M8.500 0 12 1.500v9L8.500 12 4 7.800 1.500 9.500 0 8.700 2.500 6 0 3.300l1.500-.8L4 4.200z" fill="#1a86cc"/><path d="M8.800 3.300v5.400L5.400 6z" fill="#1e1e1e"/></svg></div>
        <div><svg width="12" height="12" viewBox="0 0 12 12"><circle cx="6" cy="6" r="6" fill="#f00"/><circle cx="6" cy="6" r="3" fill="none" stroke="#fff" stroke-width=".7"/><path d="M5 4.300v3.400L8 6z" fill="#fff"/></svg></div>
        <div class="run"><svg width="13" height="12" viewBox="0 0 13 12"><circle cx="6" cy="6" r="6" fill="#5865f2"/><path d="M2.500 8c0-3 .5-4 1.500-4.500h4C9 4 9.500 5 9.500 8 8 9 4 9 2.500 8z" fill="#fff"/><path d="M4 6h1M7 6h1" stroke="#5865f2"/><circle cx="10" cy="9.500" r="2.800" fill="#e8444a"/><circle cx="10" cy="9.500" r="1" fill="#fff"/></svg></div>
        <div class="run"><svg width="12" height="12" viewBox="0 0 12 12"><path d="M3 1h8v7l-3 3-7-1 1-6z" fill="#d4dbe0"/><path d="M4 3h6l-1 4H3z" fill="#8fa4b2"/><path d="M5 6l2-2 1 2" stroke="#fff" fill="none"/><path d="M0 7h3v3H0z" fill="#aab"/></svg></div>
        <div class="tray">
          <svg width="13" height="11" viewBox="0 0 13 11"><circle cx="9.500" cy="4" r="3.500" fill="#f5962a"/><path d="M3 10a2.800 2.800 0 0 1 0-5.500 3.500 3.500 0 0 1 6.500.5 2.600 2.600 0 0 1 .5 5z" fill="#b8d8f8"/></svg>
          <span class="temp">11°C</span>
          <svg class="chev" width="5" height="7" viewBox="0 0 5 7"><path d="M4.500.5l-3 3 3 3" fill="none" stroke="#fff" stroke-width=".9"/></svg>
          <svg class="icons" width="21" height="20" viewBox="0 0 21 20" fill="none" stroke="#e6e6e6" stroke-width=".8"><path d="M2 7a1.500 1.500 0 0 1 0-3 2.500 2.500 0 0 1 4.500 0A1.600 1.600 0 0 1 7 7z" fill="#ddd"/><path d="M13 1.500h5M13 7.500h5M14 3h3v3h-3zM18.500 3v3"/><path d="M1 13h7v4H4M1 13v3M2 15v3h3M12 15h1.500L15 13v5l-1.500-1.500H12zM16.500 14v3M18.500 13v5"/></svg>
          <span class="eng">ENG</span>
          <span class="time">4:36 PM</span><span class="date">11/27/2022</span>
          <svg class="note" width="13" height="12" viewBox="0 0 13 12"><path d="M0 0h9v7H5L3 9V7H0z" fill="#eee"/><path d="M1.500 2h6M1.500 4h5" stroke="#555" stroke-width=".8"/><circle cx="8.500" cy="8" r="3.800" fill="#333" stroke="#aaa" stroke-width=".7"/><text x="7" y="10" class="q">9</text></svg>
        </div>
      </aside>
      <b class="handle hr"></b><b class="handle hb"></b><b class="handle hc"></b>
    </div>
  </main>

  <footer class="status">
    <div class="cell"><svg width="11" height="11" viewBox="0 0 11 11"><path d="M5.500 0v11M0 5.500h11M4 2l1.500-1.500L7 2M4 9l1.500 1.500L7 9M2 4 .5 5.500 2 7M9 4l1.500 1.500L9 7" fill="none" stroke="#27405e"/></svg></div>
    <div class="cell"><svg width="14" height="13" viewBox="0 0 14 13"><path d="M1.500 1v8M0 2.500 1.500 1 3 2.500M4 11.500h8.500M11 10l1.500 1.500L11 13" fill="none" stroke="#27405e"/><path d="M4.500 1.500h8v7h-8z" fill="none" stroke="#27405e" stroke-dasharray="2 1"/></svg></div>
    <div class="cell"><svg width="14" height="13" viewBox="0 0 14 13"><path d="M1.500 1v8M0 2.500 1.500 1 3 2.500M4 11.500h8.500M11 10l1.500 1.500L11 13" fill="none" stroke="#27405e"/><path d="M4.500 1.500h8v7h-8z" fill="#e4f1fb" stroke="#27405e"/></svg><span>1920 × 1080px</span></div>
    <div class="cell"></div>
    <div class="cell last"></div>
    <div class="zoom"><span>50%</span>
      <svg width="16" height="16" viewBox="0 0 16 16"><circle cx="8" cy="8" r="7" fill="#f6f6f6" stroke="#666"/><path d="M4.500 8h7" stroke="#444" stroke-width="1.300"/></svg>
      <div class="track"><svg width="10" height="17" viewBox="0 0 10 17"><path d="M0 0h10v12l-5 5-5-5z" fill="#0f78d4"/></svg></div>
      <svg width="16" height="16" viewBox="0 0 16 16"><circle cx="8" cy="8" r="7" fill="#f6f6f6" stroke="#666"/><path d="M4.500 8h7M8 4.500v7" stroke="#444" stroke-width="1.300"/></svg>
    </div>
  </footer>
</div>
</body>
</html>
```

FILE: styles.css
```css
* { box-sizing: border-box; }
body {
  margin: 0;
  width: 1520px;
  height: 918px;
  display: flex;
  overflow: hidden;
  font-family: "Noto Sans", "Open Sans", sans-serif;
  font-size: 11px;
  color: #333;
  background: #fff;
}
p, h3 { margin: 0; }
svg { display: block; flex: none; }
i { font-style: normal; }
s { text-decoration: none; }
.defs { position: absolute; width: 0; height: 0; }
.edge { width: 7px; flex: none; background: linear-gradient(#1e1e1e 46px, #333337 46px, #333337 68px, #1e1e1e 68px); }
.app { flex: 1; min-width: 0; display: flex; flex-direction: column; padding-left: 1px; }

/* Title bar */
.titlebar { height: 31px; display: flex; align-items: center; padding: 0 0 1px 7px; flex: none; }
.bar { width: 1px; height: 12px; background: #aaa; margin: 0 10px 0 7px; }
.save { margin-right: 8px; margin-top: 2px; }
.undo { margin-right: 8px; margin-top: 2px; }
.redo { margin-right: 8px; margin-top: 2px; }
.qat { margin-top: 3px; }
.bar.dark { margin: 0 7px 0 8px; }
.name { font-size: 12px; letter-spacing: -0.26px; color: #000; }
.winbtns { margin-left: auto; display: flex; gap: 35px; padding-right: 10px; }

/* Tabs */
.tabs { height: 24px; display: flex; flex: none; border-bottom: 1px solid #dadbdc; line-height: 23px; text-align: center; }
.file { width: 56px; background: #1979ca; color: #fff; }
.home { width: 58px; height: 24px; background: #f5f6f7; border: 1px solid #dadbdc; border-bottom: 0; line-height: 22px; }
.view { width: 55px; }
.tabsright { margin-left: auto; display: flex; align-items: center; gap: 10px; width: 22px; margin: -1px 7px 0 auto; }
.help { width: 16px; height: 16px; flex: none; border-radius: 8px; background: #1979ca; color: #fff; font-weight: bold; line-height: 16px; }

/* Ribbon */
.ribbon { height: 92px; flex: none; display: flex; background: #f5f6f7; border-bottom: 1px solid #d6d9dd; padding: 2px 0; }
.group { display: flex; flex-direction: column; border-right: 1px solid #e2e3e4; flex: none; height: 86px; }
.group .body { display: flex; height: 74px; }
.label { text-align: center; line-height: 15px; color: #5a5a5a; padding-right: 2px; }
.caret { display: inline-block; border: 3px solid transparent; border-top-color: #333; border-bottom: 0; width: 0; height: 0; }
.caret.up { border: 3px solid transparent; border-bottom-color: #aab; border-top: 0; }
.dim { color: #8a8a8a; }
.dim .caret { border-top-color: #b0b4ba; }
.big { display: flex; flex-direction: column; align-items: center; line-height: 14px; padding-top: 5px; }
.big span { margin-top: 3px; }
.big .caret { margin-top: 4px; }
.col { display: flex; flex-direction: column; padding-top: 1px; }
.row { height: 22px; display: flex; align-items: center; gap: 4px; }
.g-clip { width: 107px; }
.paste { width: 53px; }
.cutcopy .row { gap: 3px; margin-left: -2px; }
.g-image { width: 122px; }
.select { width: 42px; height: 66px; margin: 2px 0 0 4px; background: #c9e0f7; border: 1px solid #62a2e4; }
.selicon { height: 37px; border-bottom: 1px solid #62a2e4; padding: 6px 5px; }
.sellabel { display: flex; flex-direction: column; align-items: center; line-height: 14px; gap: 4px; padding-right: 2px; }
.imgcol { padding-left: 5px; }
.g-tools { width: 80px; }
.group .tools { display: grid; grid-template-columns: repeat(3, 24px); grid-template-rows: 28px 28px; place-items: center; padding: 8px 0 0 3px; }
.g-brush { width: 56px; padding-right: 3px; }
.g-shapes { width: 246px; }
.gallery { display: flex; width: 157px; height: 60px; margin: 5px 0 0 5px; border: 1px solid #dcdfe3; background: #fbfdff; }
.gscroll { width: 14px; border-left: 1px solid #e0e3e7; display: flex; flex-direction: column; align-items: center; justify-content: space-around; background: #f7f8fa; }
.outl { padding-left: 6px; }
.outl .row { letter-spacing: .25px; gap: 3px; }
.g-size { width: 53px; }
.g-size .big { padding-right: 3px; }
.g-colors { width: 357px; }
.colorbtn { width: 42px; height: 66px; margin-top: 2px; text-align: center; line-height: 13px; border: 1px solid transparent; display: flex; flex-direction: column; align-items: center; color: #333; }
.colorbtn.on { background: #c9e0f7; border-color: #62a2e4; margin-left: 4px; }
.colorbtn span { padding-right: 1px; }
.well { width: 32px; height: 32px; border: 1px solid #868686; padding: 1px; margin: 2px 0 3px; background-clip: content-box; flex: none; }
.black { background-color: #000; box-shadow: inset 0 0 0 1px #fff; }
.white { background-color: #fff; width: 24px; height: 26px; margin: 5px 0 6px; }
.palette { display: grid; grid-template-columns: repeat(10, 20px); grid-auto-rows: 20px; gap: 2px; margin: 3px 0 0 1px; height: 64px; }
.palette i { border: 1px solid #a0a0a0; padding: 1px; background-clip: content-box; }
.palette i:nth-child(-n+20) { box-shadow: inset 0 0 0 1px #fff; }
.palette i:nth-child(1) { background-color: #000; }
.palette i:nth-child(2) { background-color: #7f7f7f; }
.palette i:nth-child(3) { background-color: #880015; }
.palette i:nth-child(4) { background-color: #ed1c24; }
.palette i:nth-child(5) { background-color: #ff7f27; }
.palette i:nth-child(6) { background-color: #fff200; }
.palette i:nth-child(7) { background-color: #22b14c; }
.palette i:nth-child(8) { background-color: #00a2e8; }
.palette i:nth-child(9) { background-color: #3f48cc; }
.palette i:nth-child(10) { background-color: #a349a4; }
.palette i:nth-child(11) { background-color: #fff; }
.palette i:nth-child(12) { background-color: #c3c3c3; }
.palette i:nth-child(13) { background-color: #b97a57; }
.palette i:nth-child(14) { background-color: #ffaec9; }
.palette i:nth-child(15) { background-color: #ffc90e; }
.palette i:nth-child(16) { background-color: #efe4b0; }
.palette i:nth-child(17) { background-color: #b5e61d; }
.palette i:nth-child(18) { background-color: #99d9ea; }
.palette i:nth-child(19) { background-color: #7092be; }
.palette i:nth-child(20) { background-color: #c8bfe7; }
.edit svg { margin: 3px 0 4px; }
.edit span { padding-right: 0; }
.g-colors .edit { margin-left: 1px; }
.g-3d { width: 62px; align-items: center; padding-right: 4px; }
.g-3d .colorbtn { width: 58px; }

/* Work area */
.stage { flex: 1; min-height: 0; margin-left: -1px; padding: 5px 0 0 6px; background: linear-gradient(#c5cfdf, #dce6f2); }
.canvas { position: relative; width: 960px; height: 540px; display: flex; box-shadow: 9px 9px 2px -1px rgba(120, 135, 165, .22); }
.handle { position: absolute; width: 5px; height: 5px; background: #fff; border: 1px solid #555; }
.hr { left: 960px; top: 268px; }
.hb { left: 478px; top: 540px; }
.hc { left: 960px; top: 540px; }

/* Browser */
.browser { width: 929px; display: flex; flex-direction: column; background: #202124; color: #bdc1c6; }
.ctabs { height: 17px; background: #3c4043; display: flex; align-items: center; font-size: 5.700px; letter-spacing: -.04px; color: #c6c9cc; padding-left: 3px; flex: none; }
.ctab { width: 119.500px; height: 11px; border-right: 1px solid #64686c; display: flex; align-items: center; gap: 4px; padding: 0 4px 0 7px; white-space: nowrap; }
.ctab span { flex: 1; -webkit-mask-image: linear-gradient(90deg, #000 88%, transparent); }
.t1 { letter-spacing: -.12px; }
.t2 { letter-spacing: -.1px; }
.t4 { letter-spacing: -.1px; }
.ctab b { font-size: 8px; font-weight: normal; color: #eee; letter-spacing: 0; }
.ctab.t4 { border: 0; }
.ctab.active { height: 17px; background: #35363a; border: 0; border-radius: 4px 4px 0 0; color: #dfe1e4; letter-spacing: -.14px; }
.plus { font-size: 11px; color: #eee; margin-left: 9px; }
.cwin { margin-left: auto; margin-right: 7px; }
.ctool { height: 18px; background: #35363a; display: flex; align-items: center; flex: none; }
.nav { margin: 0 5px 0 7px; }
.omni { width: 762px; height: 14px; border-radius: 7px; background: #202124; display: flex; align-items: center; padding-left: 6px; flex: none; }
.url { font-size: 6.700px; margin-left: 6px; color: #9aa0a6; white-space: nowrap; width: 706px; flex: none; }
.url b { color: #fff; font-weight: 500; }
.share { margin-left: 5px; }
.ava { font: 5px "Noto Sans", sans-serif; fill: #fff; }
.q { font: bold 6px "Noto Sans", sans-serif; fill: #fff; }
.marks { height: 17px; background: #35363a; border-bottom: 1px solid #4a4c50; display: flex; align-items: center; font-size: 5.750px; color: #e8eaed; padding: 0 0 2px 7px; flex: none; white-space: nowrap; }
.marks span { display: flex; align-items: center; gap: 4px; flex: none; }
.m1 { width: 58px; } .m2 { width: 62px; } .m3 { width: 33px; } .m4 { width: 57px; } .m5 { width: 74px; } .m6 { width: 39px; } .m7 { width: 76px; }
.m8 { width: 77px; } .m9 { width: 76px; } .m10 { width: 75px; } .m11 { width: 75px; } .m12 { width: 77px; } .m13 { width: 76px; } .m14 { width: 53px; }
.more { font-size: 8px; }
.page { flex: 1; display: flex; min-height: 0; }
.doc { width: 921px; font-family: Arial, "Liberation Sans", sans-serif; }
.pscroll { width: 8px; background: #424242; display: flex; flex-direction: column; align-items: center; padding: 3px 0; }
.pscroll .caret { border-width: 2px; border-top-color: #ddd; }
.pscroll .up { border-top: 0; border-bottom: 2px solid #888; }
.pthumb { width: 7px; height: 275px; background: #686868; margin: 2px 0 auto; }
.ghead { height: 48px; display: flex; align-items: center; padding-left: 37px; }
.glogo { width: 68px; font: 500 15.300px "Open Sans", "Noto Sans", sans-serif; letter-spacing: -1px; color: #fff; }
.gsearch { width: 346px; height: 22px; border-radius: 11px; background: #303134; display: flex; align-items: center; justify-content: space-between; padding: 0 9px 0 10px; font-size: 8px; color: #fff; white-space: nowrap; }
.gtools { margin-left: 394px; }
.gava { width: 15px; height: 15px; border-radius: 8px; margin-left: 12px; background: #689f38; color: #fff; font-size: 7.500px; line-height: 15px; text-align: center; }
.gtabs { height: 18px; display: flex; border-bottom: 1px solid #34363a; padding-left: 115px; font-size: 6.900px; line-height: 12px; color: #9aa0a6; }
.gtabs span { height: 18px; display: flex; align-items: flex-start; gap: 3px; white-space: nowrap; }
.gtabs svg { margin-top: 3px; }
.gtabs .on { width: 28px; color: #8ab4f8; border-bottom: 2px solid #8ab4f8; margin-right: 12px; height: 17px; }
.n2 { width: 50px; } .n3 { width: 48px; } .n4 { width: 52px; } .n5 { width: 49px; } .n6 { width: 64px; }
.results { padding: 5px 0 0 115px; font-size: 6.970px; line-height: 11px; white-space: nowrap; }
.results p { height: 11px; }
.results s, .stat { color: #9aa0a6; }
.results a, .links { color: #8ab4f8; }
.results b { color: #dadce0; }
.links b { color: #a8c7fa; }
.results h3 { font-size: 10px; font-weight: normal; line-height: 14px; height: 15px; padding: 0; margin-top: 2px; color: #8ab4f8; }
.results h3.seen { color: #c58af9; }
.u { color: #dadce0; }
.u i { display: inline-block; border: 2px solid transparent; border-top-color: #888; border-bottom: 0; margin: 0 3px 2px 2px; }
.u em { font: 5px/6px Arial, "Liberation Sans", sans-serif; letter-spacing: .3px; border: 1px solid #4a4d51; border-radius: 1px; padding: 0 2px; display: inline-block; vertical-align: 0; }
article { margin-top: 8px; }
.links { margin-top: 3px; }
.miss { margin-top: 2px; }
.r2 { margin-top: 15px; }
.r3 { margin-top: 14px; }
.r4 { margin: 8px 0 0 8px; }
.results .r4 h3 { height: 14px; }
.r5 { margin-top: 15px; }

/* File Explorer window */
.explorer { position: absolute; left: 254px; top: 118px; width: 466px; height: 295px; background: #202020; color: #fff; font-size: 5.600px; display: flex; flex-direction: column; box-shadow: 0 1px 5px rgba(0, 0, 0, .7); white-space: nowrap; }
.etitle { height: 15px; background: #000; display: flex; align-items: center; padding-left: 4px; gap: 3px; flex: none; }
.etitle i { width: 1px; height: 6px; background: #888; margin: 0; }
.ewin { margin: 0 7px 0 auto; }
.etabs { height: 12px; background: #000; display: flex; line-height: 12px; flex: none; }
.etabs span { width: 29px; text-align: center; }
.etabs .efile { width: 28px; background: #80267f; }
.etabs svg { margin: 2px 0 0 auto; }
.eaddr { height: 21px; background: #191919; display: flex; align-items: center; padding: 0 0 1px 7px; flex: none; }
.ebox { width: 230px; height: 16px; margin: 0 6px 0 2px; border: 1px solid #484848; display: flex; align-items: center; padding-left: 2px; gap: 4px; }
.sep { color: #aaa; }
.ebox .r { margin: 0 2px 0 auto; }
.esearch { width: 172px; height: 16px; border: 1px solid #484848; display: flex; align-items: center; gap: 6px; padding-left: 7px; color: #858585; }
.emain { flex: 1; display: flex; min-height: 0; }
.tree { width: 70px; background: #191919; overflow: hidden; padding-top: 8px; line-height: 12px; }
.tree div { height: 12px; display: flex; align-items: center; gap: 2.500px; padding-left: 16px; }
.tree .l0 { padding-left: 12px; }
.tree .sel { background: #333; height: 11px; padding-left: 13px; margin-bottom: 1px; }
.tree .gap { margin-top: 4px; letter-spacing: -.05px; gap: 1.500px; }
.tree .p { margin-left: auto; margin-right: 1px; }
.tree div:nth-child(6), .tree div:nth-child(7) { letter-spacing: -.17px; }
.escroll { width: 8px; background: #171717; display: flex; flex-direction: column; align-items: center; padding: 2px 0; justify-content: space-between; flex: none; }
.escroll div { width: 7px; background: #4d4d4d; margin: 2px 0 auto; }
.tscroll div { height: 186px; }
.fscroll div { height: 111px; }
.files { width: 380px; border-left: 1px solid #2b2b2b; padding: 3px 3px 0 0; overflow: hidden; }
.fh { height: 12px; display: flex; align-items: center; gap: 2px; font-size: 7px; padding-left: 4px; }
.fh i { flex: 1; height: 1px; background: #2f2f2f; margin-left: 3px; }
.fgrid { display: grid; grid-template-columns: repeat(3, 114px); grid-auto-rows: 32px; height: 106px; padding: 6px 0 0 21px; line-height: 8px; }
.fgrid > div { display: flex; gap: 2px; }
.fgrid > div > svg { margin-top: 1px; }
.flist { padding: 5px 0 0 18px; }
.flist div { height: 12.450px; display: flex; align-items: center; }
.flist div:first-child { height: 12.800px; }
.flist span { margin-left: 6px; width: 168px; flex: none; }
.flist span:last-child { width: 166px; letter-spacing: -.01px; }
.estatus { height: 12px; background: #333; display: flex; align-items: center; padding: 0 3px 0 7px; color: #ddd; flex: none; }
.estatus i { width: 1px; height: 5px; background: #aaa; margin-left: 5px; }
.estatus svg { margin-left: auto; }

/* Taskbar */
.taskbar { width: 31px; background: #1e1e1e; display: flex; flex-direction: column; color: #fff; }
.taskbar > div { height: 23.500px; display: flex; align-items: center; justify-content: center; flex: none; border-right: 1px solid transparent; }
.taskbar > div:nth-child(-n+2) { height: 20.500px; }
.taskbar .cur { background: #474747; }
.taskbar .run { border-right-color: #e87bdf; }
.taskbar .tray { margin-top: auto; height: 133px; display: flex; flex-direction: column; justify-content: flex-start; align-items: center; font-size: 5.900px; line-height: 7px; letter-spacing: -.2px; }
.temp { margin-top: 1px; font-size: 6.500px; }
.chev { margin: 12px 15px 0 0; }
.icons { margin-top: 4px; }
.eng { margin-top: 8px; }
.time { margin-top: 12px; }
.date { margin-top: 2px; }
.note { margin-top: 8px; margin-left: 3px; }

/* Status bar */
.status { height: 26px; margin-left: -1px; background: #f0f0f0; border-top: 1px solid #d7d7d7; display: flex; padding-left: 1px; flex: none; }
.cell { width: 156px; height: 24px; margin-top: 1px; border-right: 1px solid #d9d9d9; display: flex; align-items: center; padding: 0 0 2px 5px; gap: 5px; color: #000; font-size: 12px; letter-spacing: -.55px; }
.cell:first-child { padding-left: 4px; }
.cell.last { width: 679px; }
.zoom { flex: 1; display: flex; align-items: center; padding: 0 0 1px 27px; color: #000; font-size: 12px; letter-spacing: -.5px; gap: 7px; }
.track { width: 85px; height: 4px; margin: 0 4px 0 3px; border: 1px solid #cfcfcf; background: #e6e6e6; display: flex; align-items: center; padding-left: 15px; }
```
